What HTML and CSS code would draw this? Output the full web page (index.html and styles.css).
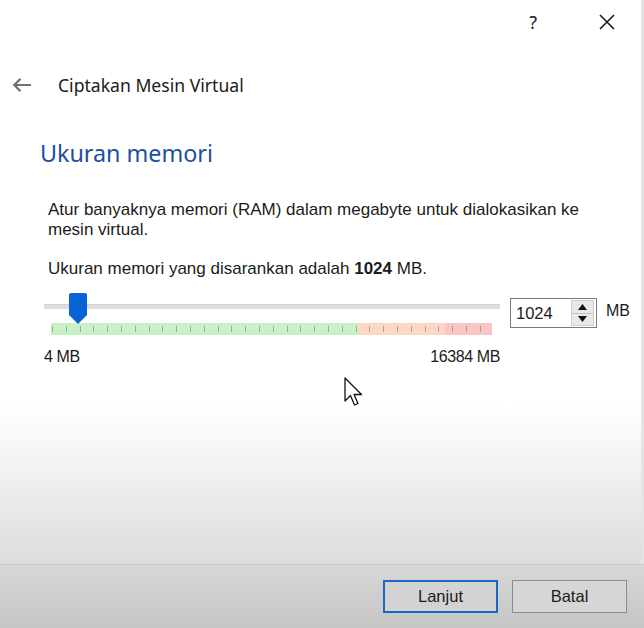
FILE: index.html
```html
<!DOCTYPE html>
<html lang="id">
<head>
<meta charset="utf-8">
<title>Ciptakan Mesin Virtual</title>
<link rel="stylesheet" href="styles.css">
</head>
<body>
<div class="dialog">
  <div class="titlebar">
    <span class="help">?</span>
    <span class="close" aria-label="Tutup">
      <svg width="16" height="16" viewBox="0 0 16 16"><path d="M1 1 L15 15 M15 1 L1 15" stroke="#1a1a1a" stroke-width="1.6" fill="none"/></svg>
    </span>
  </div>
  <div class="header">
    <span class="back">
      <svg width="20" height="16" viewBox="0 0 20 16"><path d="M19 8 H2.5 M8.5 1.8 L2.3 8 L8.5 14.2" stroke="#707070" stroke-width="2.2" fill="none" stroke-linejoin="miter"/></svg>
    </span>
    <span class="title">Ciptakan Mesin Virtual</span>
  </div>
  <main class="content">
    <h2 class="heading">Ukuran memori</h2>
    <p class="desc">Atur banyaknya memori (RAM) dalam megabyte untuk dialokasikan ke mesin virtual.</p>
    <p class="desc recommend">Ukuran memori yang disarankan adalah <b>1024</b> MB.</p>
    <div class="memrow">
      <div class="slider">
        <div class="track-wrap">
          <div class="track"></div>
          <svg class="thumb" width="18" height="31" viewBox="0 0 18 31"><path d="M2 0 H16 Q18 0 18 2 V22 L9 31 L0 22 V2 Q0 0 2 0 Z" fill="#0a63d6"/></svg>
        </div>
        <div class="band"></div>
        <div class="limits"><span>4 MB</span><span>16384 MB</span></div>
      </div>
      <div class="spin">
        <span class="spin-val">1024</span>
        <span class="spin-btns">
          <span class="sb up"><svg width="9" height="6" viewBox="0 0 9 6"><path d="M4.5 0 L9 6 H0 Z" fill="#111"/></svg></span>
          <span class="sb down"><svg width="9" height="6" viewBox="0 0 9 6"><path d="M0 0 H9 L4.5 6 Z" fill="#111"/></svg></span>
        </span>
      </div>
      <span class="unit">MB</span>
    </div>
  </main>
  <footer class="footer">
    <button class="btn primary">Lanjut</button>
    <button class="btn">Batal</button>
  </footer>
  <svg class="cursor" width="20" height="31" viewBox="0 0 20 31"><path d="M1 1 L1 24 L6.5 18.5 L10.5 28 L14 26.5 L10 17.5 L17.5 17.5 Z" fill="#fff" stroke="#111" stroke-width="1.3" stroke-linejoin="round"/></svg>
</div>
</body>
</html>
```
FILE: styles.css
```css
html, body {
  margin: 0;
  padding: 0;
}
body {
  width: 644px;
  height: 628px;
  overflow: hidden;
  font-family: "Liberation Sans", Arial, sans-serif;
  color: #1b1b1b;
}
.dialog {
  position: relative;
  width: 644px;
  height: 628px;
  display: flex;
  flex-direction: column;
  background: linear-gradient(to bottom, #ffffff 0, #ffffff 405px, #f1f1f1 470px, #dcdcdc 564px);
  box-shadow: inset -3px 0 0 #e4e4e4;
}
.titlebar {
  height: 44px;
  display: flex;
  align-items: center;
  justify-content: flex-end;
  gap: 62px;
  padding-right: 29px;
}
.help {
  font-family: "Noto Sans", "Liberation Sans", sans-serif;
  font-size: 18px;
  color: #1a1a1a;
}
.close {
  display: flex;
}
.header {
  margin-top: 21px;
  height: 40px;
  display: flex;
  align-items: center;
  padding-left: 12px;
}
.back {
  display: flex;
  width: 46px;
}
.title {
  font-family: "Noto Sans", "Open Sans", sans-serif;
  font-size: 17.6px;
  color: #202020;
}
.content {
  padding-left: 40px;
}
.heading {
  margin: 34px 0 0 0;
  font-family: "Noto Sans", "Open Sans", sans-serif;
  font-weight: normal;
  font-size: 23.3px;
  line-height: 28px;
  color: #1c4fa0;
}
.desc {
  margin: 33px 0 0 8px;
  width: 545px;
  font-size: 17px;
  line-height: 20px;
  color: #1b1b1b;
}
.recommend {
  margin-top: 19px;
}
.recommend b {
  font-weight: bold;
}
.memrow {
  margin-top: 14px;
  display: flex;
  align-items: flex-start;
}
.slider {
  width: 456px;
  margin-left: 4px;
}
.track-wrap {
  position: relative;
  height: 30px;
}
.track {
  position: absolute;
  left: 0;
  right: 0;
  top: 11px;
  height: 5px;
  background: #dedede;
  border-top: 1px solid #d2d2d2;
  box-sizing: border-box;
}
.thumb {
  position: absolute;
  left: 25px;
  top: 0;
}
.band {
  margin-left: 7px;
  width: 441px;
  height: 12px;
  background:
    repeating-linear-gradient(90deg, transparent 0, transparent 1px, rgba(70,90,70,0.42) 1px, rgba(70,90,70,0.42) 2px, transparent 2px, transparent 13.8px) 0 50% / 100% 6px no-repeat,
    linear-gradient(90deg, #c8f1c8 0, #c8f1c8 307px, #fdd8c6 307px, #fdd8c6 394px, #fbc5c5 394px, #fbc5c5 100%);
}
.limits {
  margin-top: 13px;
  display: flex;
  justify-content: space-between;
  font-size: 16px;
  letter-spacing: -0.4px;
  color: #1b1b1b;
}
.spin {
  margin-left: 10px;
  margin-top: 5px;
  width: 87px;
  height: 30px;
  box-sizing: border-box;
  border: 1px solid #7a7a7a;
  background: #fff;
  display: flex;
  align-items: center;
  justify-content: space-between;
  padding: 1px 2px 1px 5px;
}
.spin-val {
  font-size: 16.5px;
}
.spin-btns {
  width: 23px;
  height: 26px;
  display: flex;
  flex-direction: column;
  border: 1px solid #cfcfcf;
  box-sizing: border-box;
  background: #e8e8e8;
}
.sb {
  flex: 1;
  display: flex;
  align-items: center;
  justify-content: center;
}
.sb.up {
  border-bottom: 1px solid #c4c4c4;
}
.unit {
  margin-left: 9px;
  margin-top: 9px;
  font-size: 16px;
}
.footer {
  margin-top: auto;
  height: 64px;
  box-sizing: border-box;
  border-top: 1px solid #cdcdcd;
  background: linear-gradient(to bottom, #d7d7d7, #c5c5c5);
  display: flex;
  justify-content: flex-end;
  align-items: flex-start;
  gap: 14px;
  padding: 15px 17px 0 0;
}
.btn {
  width: 115px;
  height: 33px;
  box-sizing: border-box;
  border: 1px solid #8c8c8c;
  background: #d6d6d6;
  font-family: "Liberation Sans", Arial, sans-serif;
  font-size: 16.5px;
  color: #1b1b1b;
  padding: 0;
}
.btn.primary {
  border: 2px solid #1769c4;
  background: #d3d3d3;
}
.cursor {
  position: absolute;
  left: 344px;
  top: 377px;
}
```
